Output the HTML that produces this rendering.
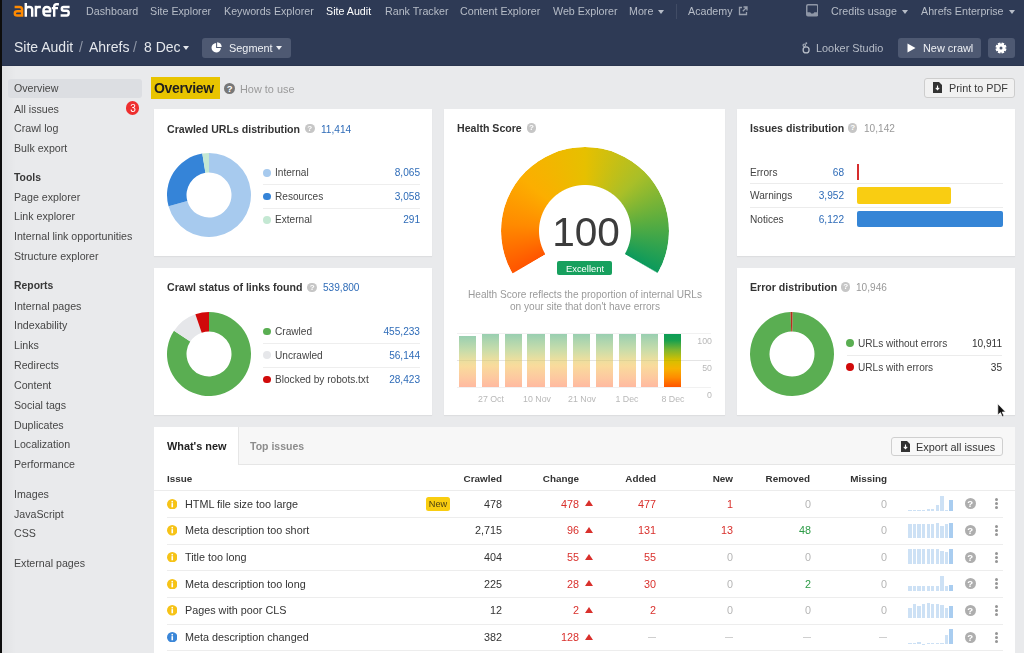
<!DOCTYPE html><html><head><meta charset="utf-8"><style>
html,body{margin:0;padding:0;}
body{width:1024px;height:653px;overflow:hidden;position:relative;background:#e9eaec;font-family:"Liberation Sans", sans-serif;}
.t{position:absolute;white-space:nowrap;line-height:1;will-change:transform;}
.r{position:absolute;}

</style></head><body>
<div class="r" style="left:0.00px;top:0.00px;width:1024.00px;height:66.00px;background:#2e3a55;"></div>
<div class="r" style="left:0.00px;top:65.00px;width:1024.00px;height:1.00px;background:#2a354f;"></div>
<div class="r" style="left:0.00px;top:0.00px;width:1.60px;height:653.00px;background:#0d0d0d;"></div>
<div class="r" style="left:1.60px;top:66.00px;width:14.40px;height:587.00px;background:linear-gradient(to right, rgba(0,0,0,0.035), rgba(0,0,0,0));"></div>
<svg class="r" style="left:0;top:0" width="80" height="22" viewBox="0 0 80 22"><g fill="none" stroke-width="2.45" stroke-linejoin="round"><path stroke="#ff8a00" d="M14.6 6.9 H19.4 Q22.1 6.9 22.1 9.6 V16.7 M22.1 11.3 H17.3 Q14.8 11.3 14.8 13.4 Q14.8 15.5 17.3 15.5 H22.1"/><path stroke="#fff" d="M25.8 3.1 V16.7 M25.8 9.6 Q25.8 6.9 28.5 6.9 H29.5 Q32.2 6.9 32.2 9.6 V16.7"/><path stroke="#fff" d="M35.9 5.7 V16.7 M35.9 9.6 Q35.9 6.9 38.6 6.9 H40.9"/><path stroke="#fff" d="M43.4 11.4 H50.2 V10.2 Q50.2 6.9 46.8 6.9 Q43.4 6.9 43.4 11.2 Q43.4 15.5 46.8 15.5 H50.8"/><path stroke="#fff" d="M54.2 16.7 V6.4 Q54.2 4.3 56.4 4.3 H58.9 M51.8 8.1 H58.0"/><path stroke="#fff" d="M69.6 6.9 H63.6 Q61.8 6.9 61.8 8.8 Q61.8 10.8 63.8 10.8 H66.8 Q68.7 10.8 68.7 13.1 Q68.7 15.5 66.8 15.5 H60.6"/></g></svg>
<div class="t" style="left:85.60px;top:5.80px;font-size:10.7px;color:#b6bcc7;font-weight:400;">Dashboard</div>
<div class="t" style="left:150.30px;top:5.80px;font-size:10.7px;color:#b6bcc7;font-weight:400;">Site Explorer</div>
<div class="t" style="left:223.50px;top:5.80px;font-size:10.7px;color:#b6bcc7;font-weight:400;">Keywords Explorer</div>
<div class="t" style="left:385.30px;top:5.80px;font-size:10.7px;color:#b6bcc7;font-weight:400;">Rank Tracker</div>
<div class="t" style="left:459.70px;top:5.80px;font-size:10.7px;color:#b6bcc7;font-weight:400;">Content Explorer</div>
<div class="t" style="left:552.90px;top:5.80px;font-size:10.7px;color:#b6bcc7;font-weight:400;">Web Explorer</div>
<div class="t" style="left:629.00px;top:5.80px;font-size:10.7px;color:#b6bcc7;font-weight:400;">More</div>
<div class="t" style="left:326.00px;top:5.80px;font-size:10.7px;color:#ffffff;font-weight:400;">Site Audit</div>
<div class="r" style="left:657.60px;top:9.80px;width:0;height:0;border-left:3.20px solid transparent;border-right:3.20px solid transparent;border-top:4.00px solid #b6bcc7;"></div>
<div class="r" style="left:676.20px;top:3.50px;width:1.00px;height:15.00px;background:#414c65;"></div>
<div class="t" style="left:688.40px;top:5.80px;font-size:10.7px;color:#b6bcc7;font-weight:400;">Academy</div>
<svg class="r" style="left:737.5px;top:5.5px" width="10" height="10" viewBox="0 0 10 10"><path d="M4 1.5H1.5V8.5H8.5V6" fill="none" stroke="#99a0ae" stroke-width="1.3"/><path d="M5.5 1H9V4.5M9 1L4.8 5.2" fill="none" stroke="#99a0ae" stroke-width="1.3"/></svg>
<svg class="r" style="left:805.8px;top:4.1px" width="12.5" height="12.5" viewBox="0 0 12.5 12.5"><rect x="0.75" y="0.75" width="11" height="11" rx="1.2" fill="none" stroke="#8e96a6" stroke-width="1.5"/><path d="M1 8.3H4.2L5.2 9.6H7.3L8.3 8.3H11.5V11.5H1Z" fill="#8e96a6"/></svg>
<div class="t" style="left:830.60px;top:5.80px;font-size:10.7px;color:#b6bcc7;font-weight:400;">Credits usage</div>
<div class="r" style="left:902.10px;top:9.80px;width:0;height:0;border-left:3.20px solid transparent;border-right:3.20px solid transparent;border-top:4.00px solid #b6bcc7;"></div>
<div class="t" style="left:921.30px;top:5.80px;font-size:10.7px;color:#b6bcc7;font-weight:400;">Ahrefs Enterprise</div>
<div class="r" style="left:1008.90px;top:9.80px;width:0;height:0;border-left:3.20px solid transparent;border-right:3.20px solid transparent;border-top:4.00px solid #b6bcc7;"></div>
<div class="t" style="left:13.80px;top:40.00px;font-size:14px;color:#e4e7ec;font-weight:400;">Site Audit</div>
<div class="t" style="left:78.50px;top:40.00px;font-size:14px;color:#8f97a7;font-weight:300;">/</div>
<div class="t" style="left:88.80px;top:40.00px;font-size:14px;color:#e4e7ec;font-weight:400;">Ahrefs</div>
<div class="t" style="left:133.20px;top:40.00px;font-size:14px;color:#8f97a7;font-weight:400;">/</div>
<div class="t" style="left:143.60px;top:40.00px;font-size:14px;color:#e4e7ec;font-weight:400;">8 Dec</div>
<div class="r" style="left:183.10px;top:46.30px;width:0;height:0;border-left:3.20px solid transparent;border-right:3.20px solid transparent;border-top:4.00px solid #e4e7ec;"></div>
<div class="r" style="left:201.60px;top:37.90px;width:89.00px;height:19.90px;background:#4e5972;border-radius:3px;"></div>
<svg class="r" style="left:210.6px;top:42px" width="11" height="11" viewBox="0 0 11 11"><path d="M6.1 0.3 A4.9 4.9 0 0 1 10.7 4.9 L6.1 4.9Z" fill="#fff"/><path d="M5.1 1.1 A4.7 4.7 0 1 0 9.9 5.9 L5.1 5.9Z" fill="#fff"/></svg>
<div class="t" style="left:228.50px;top:42.80px;font-size:10.9px;color:#eef0f4;font-weight:400;">Segment</div>
<div class="r" style="left:276.20px;top:46.20px;width:0;height:0;border-left:3.20px solid transparent;border-right:3.20px solid transparent;border-top:4.00px solid #eef0f4;"></div>
<svg class="r" style="left:800px;top:40px" width="12" height="16" viewBox="0 0 12 16"><circle cx="6.1" cy="9.9" r="3.0" fill="none" stroke="#b7bdc8" stroke-width="1.25"/><circle cx="4.3" cy="5.3" r="1.25" fill="none" stroke="#a4abb8" stroke-width="1.1"/><circle cx="6.3" cy="3.3" r="0.95" fill="#a4abb8"/></svg>
<div class="t" style="left:816.20px;top:43.00px;font-size:10.9px;color:#b6bcc7;font-weight:400;">Looker Studio</div>
<div class="r" style="left:897.90px;top:37.90px;width:83.40px;height:20.00px;background:#4e5972;border-radius:3px;"></div>
<svg class="r" style="left:907.3px;top:42.5px" width="9" height="10" viewBox="0 0 9 10"><path d="M0.5 0.5L8.5 5L0.5 9.5Z" fill="#fff"/></svg>
<div class="t" style="left:923.00px;top:43.00px;font-size:10.9px;color:#eef0f4;font-weight:400;">New crawl</div>
<div class="r" style="left:988.00px;top:37.90px;width:27.20px;height:20.00px;background:#4e5972;border-radius:3px;"></div>
<svg class="r" style="left:994.4px;top:40.8px" width="14" height="14" viewBox="-7 -7 14 14"><rect x="-1.45" y="-5.5" width="2.9" height="2.8" rx="0.3" transform="rotate(22.5)" fill="#fff"/><rect x="-1.45" y="-5.5" width="2.9" height="2.8" rx="0.3" transform="rotate(67.5)" fill="#fff"/><rect x="-1.45" y="-5.5" width="2.9" height="2.8" rx="0.3" transform="rotate(112.5)" fill="#fff"/><rect x="-1.45" y="-5.5" width="2.9" height="2.8" rx="0.3" transform="rotate(157.5)" fill="#fff"/><rect x="-1.45" y="-5.5" width="2.9" height="2.8" rx="0.3" transform="rotate(202.5)" fill="#fff"/><rect x="-1.45" y="-5.5" width="2.9" height="2.8" rx="0.3" transform="rotate(247.5)" fill="#fff"/><rect x="-1.45" y="-5.5" width="2.9" height="2.8" rx="0.3" transform="rotate(292.5)" fill="#fff"/><rect x="-1.45" y="-5.5" width="2.9" height="2.8" rx="0.3" transform="rotate(337.5)" fill="#fff"/><circle r="3.9" fill="#fff"/><circle r="1.5" fill="#4e5972"/></svg>
<div class="r" style="left:8.00px;top:78.80px;width:133.80px;height:19.00px;background:#dcdee2;border-radius:3px;"></div>
<div class="t" style="left:13.90px;top:83.30px;font-size:10.65px;color:#464646;font-weight:400;">Overview</div>
<div class="t" style="left:13.90px;top:103.50px;font-size:10.65px;color:#464646;font-weight:400;">All issues</div>
<div class="t" style="left:13.90px;top:123.30px;font-size:10.65px;color:#464646;font-weight:400;">Crawl log</div>
<div class="t" style="left:13.90px;top:143.00px;font-size:10.65px;color:#464646;font-weight:400;">Bulk export</div>
<div class="t" style="left:13.90px;top:191.70px;font-size:10.65px;color:#464646;font-weight:400;">Page explorer</div>
<div class="t" style="left:13.90px;top:211.40px;font-size:10.65px;color:#464646;font-weight:400;">Link explorer</div>
<div class="t" style="left:13.90px;top:231.40px;font-size:10.65px;color:#464646;font-weight:400;">Internal link opportunities</div>
<div class="t" style="left:13.90px;top:251.30px;font-size:10.65px;color:#464646;font-weight:400;">Structure explorer</div>
<div class="t" style="left:13.90px;top:300.80px;font-size:10.65px;color:#464646;font-weight:400;">Internal pages</div>
<div class="t" style="left:13.90px;top:320.20px;font-size:10.65px;color:#464646;font-weight:400;">Indexability</div>
<div class="t" style="left:13.90px;top:340.00px;font-size:10.65px;color:#464646;font-weight:400;">Links</div>
<div class="t" style="left:13.90px;top:360.00px;font-size:10.65px;color:#464646;font-weight:400;">Redirects</div>
<div class="t" style="left:13.90px;top:379.80px;font-size:10.65px;color:#464646;font-weight:400;">Content</div>
<div class="t" style="left:13.90px;top:399.60px;font-size:10.65px;color:#464646;font-weight:400;">Social tags</div>
<div class="t" style="left:13.90px;top:419.70px;font-size:10.65px;color:#464646;font-weight:400;">Duplicates</div>
<div class="t" style="left:13.90px;top:439.40px;font-size:10.65px;color:#464646;font-weight:400;">Localization</div>
<div class="t" style="left:13.90px;top:459.20px;font-size:10.65px;color:#464646;font-weight:400;">Performance</div>
<div class="t" style="left:13.90px;top:489.00px;font-size:10.65px;color:#464646;font-weight:400;">Images</div>
<div class="t" style="left:13.90px;top:508.70px;font-size:10.65px;color:#464646;font-weight:400;">JavaScript</div>
<div class="t" style="left:13.90px;top:528.30px;font-size:10.65px;color:#464646;font-weight:400;">CSS</div>
<div class="t" style="left:13.90px;top:557.70px;font-size:10.65px;color:#464646;font-weight:400;">External pages</div>
<div class="t" style="left:13.90px;top:172.80px;font-size:10.4px;color:#383838;font-weight:700;">Tools</div>
<div class="t" style="left:13.90px;top:281.20px;font-size:10.4px;color:#383838;font-weight:700;">Reports</div>
<div class="r" style="left:125.90px;top:101.30px;width:13.40px;height:13.60px;background:#ee2e2e;border-radius:50%;"></div>
<div class="t" style="left:-167.40px;width:600px;text-align:center;top:103.90px;font-size:10px;color:#fff;font-weight:400;">3</div>
<div class="r" style="left:150.80px;top:77.00px;width:69.20px;height:21.70px;background:#e8c400;"></div>
<div class="t" style="left:154.40px;top:81.00px;font-size:14px;color:#1f1f1f;font-weight:700;letter-spacing:-0.3px;">Overview</div>
<div class="r" style="left:224.10px;top:83.10px;width:11px;height:11px;border-radius:50%;background:#777;color:#fff;font-size:9.50px;line-height:11px;text-align:center;font-weight:700;">?</div>
<div class="t" style="left:239.60px;top:84.30px;font-size:10.9px;color:#9a9a9a;font-weight:400;">How to use</div>
<div class="r" style="left:923.60px;top:77.60px;width:91.40px;height:20.20px;background:#f1f1f1;border:1px solid #cdcdcd;border-radius:3px;box-sizing:border-box;"></div>
<svg class="r" style="left:932.7px;top:82px" width="9" height="11" viewBox="0 0 9 11"><path d="M0 0H6L9 3V11H0Z" fill="#333"/><path d="M4.5 3.5V7.5M2.8 5.9L4.5 7.7L6.2 5.9" stroke="#fff" stroke-width="1.1" fill="none"/></svg>
<div class="t" style="left:948.60px;top:83.00px;font-size:10.8px;color:#3a3a3a;font-weight:400;">Print to PDF</div>
<div class="r" style="left:154.00px;top:109.00px;width:278.30px;height:147.20px;background:#fff;box-shadow:0 1px 1px rgba(0,0,0,0.05);"></div>
<div class="r" style="left:154.00px;top:267.70px;width:278.30px;height:147.40px;background:#fff;box-shadow:0 1px 1px rgba(0,0,0,0.05);"></div>
<div class="r" style="left:444.10px;top:109.00px;width:280.90px;height:306.10px;background:#fff;box-shadow:0 1px 1px rgba(0,0,0,0.05);"></div>
<div class="r" style="left:737.20px;top:109.00px;width:278.00px;height:147.20px;background:#fff;box-shadow:0 1px 1px rgba(0,0,0,0.05);"></div>
<div class="r" style="left:737.20px;top:267.70px;width:278.00px;height:147.40px;background:#fff;box-shadow:0 1px 1px rgba(0,0,0,0.05);"></div>
<div class="t" style="left:167.00px;top:123.60px;font-size:10.6px;color:#333;font-weight:700;">Crawled URLs distribution</div>
<div class="r" style="left:305.05px;top:123.85px;width:9.5px;height:9.5px;border-radius:50%;background:#c6c6c6;color:#fff;font-size:8.07px;line-height:9.5px;text-align:center;font-weight:700;">?</div>
<div class="t" style="left:320.80px;top:124.60px;font-size:10.1px;color:#2f6cb8;font-weight:400;">11,414</div>
<svg class="r" style="left:164.60px;top:151.00px;" width="88" height="88"><path d="M44.000,2.000 A42,42 0 1 1 3.553,55.315 L22.332,50.061 A22.5,22.5 0 1 0 44.000,21.500 Z" fill="#a7caee"/><path d="M3.553,55.315 A42,42 0 0 1 37.301,2.538 L40.411,21.788 A22.5,22.5 0 0 0 22.332,50.061 Z" fill="#3584d8"/><path d="M37.301,2.538 A42,42 0 0 1 44.000,2.000 L44.000,21.500 A22.5,22.5 0 0 0 40.411,21.788 Z" fill="#c4e8d3"/></svg>
<div class="r" style="left:262.80px;top:168.90px;width:7.8px;height:7.8px;border-radius:50%;background:#a7caee"></div>
<div class="t" style="left:275.30px;top:168.20px;font-size:10.1px;color:#444;font-weight:400;">Internal</div>
<div class="t" style="left:-180.30px;width:600px;text-align:right;top:168.20px;font-size:10.1px;color:#2f6cb8;font-weight:400;">8,065</div>
<div class="r" style="left:262.80px;top:192.70px;width:7.8px;height:7.8px;border-radius:50%;background:#3584d8"></div>
<div class="t" style="left:275.30px;top:192.00px;font-size:10.1px;color:#444;font-weight:400;">Resources</div>
<div class="t" style="left:-180.30px;width:600px;text-align:right;top:192.00px;font-size:10.1px;color:#2f6cb8;font-weight:400;">3,058</div>
<div class="r" style="left:262.80px;top:215.90px;width:7.8px;height:7.8px;border-radius:50%;background:#c4e8d3"></div>
<div class="t" style="left:275.30px;top:215.20px;font-size:10.1px;color:#444;font-weight:400;">External</div>
<div class="t" style="left:-180.30px;width:600px;text-align:right;top:215.20px;font-size:10.1px;color:#2f6cb8;font-weight:400;">291</div>
<div class="r" style="left:262.70px;top:184.00px;width:157.00px;height:1.00px;background:#eeeeee;"></div>
<div class="r" style="left:262.70px;top:208.00px;width:157.00px;height:1.00px;background:#eeeeee;"></div>
<div class="t" style="left:166.50px;top:282.30px;font-size:10.6px;color:#333;font-weight:700;">Crawl status of links found</div>
<div class="r" style="left:307.45px;top:282.55px;width:9.5px;height:9.5px;border-radius:50%;background:#c6c6c6;color:#fff;font-size:8.07px;line-height:9.5px;text-align:center;font-weight:700;">?</div>
<div class="t" style="left:322.60px;top:283.30px;font-size:10.1px;color:#2f6cb8;font-weight:400;">539,800</div>
<svg class="r" style="left:164.60px;top:310.40px;" width="88" height="88"><path d="M44.000,2.000 A42,42 0 1 1 9.018,20.757 L25.260,31.548 A22.5,22.5 0 1 0 44.000,21.500 Z" fill="#5aae52"/><path d="M9.018,20.757 A42,42 0 0 1 30.357,4.278 L36.691,22.720 A22.5,22.5 0 0 0 25.260,31.548 Z" fill="#e6e7ea"/><path d="M30.357,4.278 A42,42 0 0 1 44.000,2.000 L44.000,21.500 A22.5,22.5 0 0 0 36.691,22.720 Z" fill="#d10a0a"/></svg>
<div class="r" style="left:262.80px;top:327.60px;width:7.8px;height:7.8px;border-radius:50%;background:#5aae52"></div>
<div class="t" style="left:275.30px;top:326.90px;font-size:10.1px;color:#444;font-weight:400;">Crawled</div>
<div class="t" style="left:-180.30px;width:600px;text-align:right;top:326.90px;font-size:10.1px;color:#2f6cb8;font-weight:400;">455,233</div>
<div class="r" style="left:262.80px;top:351.40px;width:7.8px;height:7.8px;border-radius:50%;background:#e6e7ea"></div>
<div class="t" style="left:275.30px;top:350.70px;font-size:10.1px;color:#444;font-weight:400;">Uncrawled</div>
<div class="t" style="left:-180.30px;width:600px;text-align:right;top:350.70px;font-size:10.1px;color:#2f6cb8;font-weight:400;">56,144</div>
<div class="r" style="left:262.80px;top:375.50px;width:7.8px;height:7.8px;border-radius:50%;background:#d10a0a"></div>
<div class="t" style="left:275.30px;top:374.80px;font-size:10.1px;color:#444;font-weight:400;">Blocked by robots.txt</div>
<div class="t" style="left:-180.30px;width:600px;text-align:right;top:374.80px;font-size:10.1px;color:#2f6cb8;font-weight:400;">28,423</div>
<div class="r" style="left:262.70px;top:343.00px;width:157.00px;height:1.00px;background:#eeeeee;"></div>
<div class="r" style="left:262.70px;top:367.00px;width:157.00px;height:1.00px;background:#eeeeee;"></div>
<div class="t" style="left:457.30px;top:122.90px;font-size:10.6px;color:#333;font-weight:700;">Health Score</div>
<div class="r" style="left:526.75px;top:123.15px;width:9.5px;height:9.5px;border-radius:50%;background:#c6c6c6;color:#fff;font-size:8.07px;line-height:9.5px;text-align:center;font-weight:700;">?</div>
<div class="r" style="left:500.90px;top:146.90px;width:168px;height:168px;border-radius:50%;background:conic-gradient(from -120deg, #ff5500 0deg, #ff8a00 35deg, #fcae00 70deg, #e6c000 120deg, #a9bf28 165deg, #5eae3e 200deg, #0c9a5c 239.5deg, rgba(12,154,92,0) 240.5deg, rgba(255,85,0,0) 359.3deg, #ff5500 360deg);-webkit-mask:radial-gradient(circle closest-side, transparent 45.5px, #000 46.5px);"></div>
<div class="t" style="left:285.50px;width:600px;text-align:center;top:212.00px;font-size:40.6px;color:#3c3c3c;font-weight:400;">100</div>
<div class="r" style="left:556.80px;top:261.20px;width:55.70px;height:13.60px;background:#17a05e;border-radius:2px;"></div>
<div class="t" style="left:284.70px;width:600px;text-align:center;top:264.30px;font-size:9.4px;color:#fff;font-weight:400;">Excellent</div>
<div class="t" style="left:284.70px;width:600px;text-align:center;top:289.90px;font-size:10.1px;color:#9a9a9a;font-weight:400;">Health Score reflects the proportion of internal URLs</div>
<div class="t" style="left:284.70px;width:600px;text-align:center;top:302.40px;font-size:10.1px;color:#9a9a9a;font-weight:400;">on your site that don't have errors</div>
<div class="r" style="left:456.60px;top:332.70px;width:254.40px;height:1.00px;background:#f1f1f1;"></div>
<div class="r" style="left:456.60px;top:359.80px;width:254.40px;height:1.00px;background:#f1f1f1;"></div>
<div class="r" style="left:456.60px;top:386.70px;width:254.40px;height:1.00px;background:#f1f1f1;"></div>
<div class="r" style="left:459.20px;top:336.30px;width:17.20px;height:50.90px;background:linear-gradient(to bottom, #99cfb1 0%, #c6dcab 28%, #ebdf9f 48%, #f9db9c 60%, #fdc9a0 82%, #ffb9a0 100%);"></div>
<div class="r" style="left:481.96px;top:333.70px;width:17.20px;height:53.50px;background:linear-gradient(to bottom, #99cfb1 0%, #c6dcab 28%, #ebdf9f 48%, #f9db9c 60%, #fdc9a0 82%, #ffb9a0 100%);"></div>
<div class="r" style="left:504.72px;top:333.70px;width:17.20px;height:53.50px;background:linear-gradient(to bottom, #99cfb1 0%, #c6dcab 28%, #ebdf9f 48%, #f9db9c 60%, #fdc9a0 82%, #ffb9a0 100%);"></div>
<div class="r" style="left:527.48px;top:333.70px;width:17.20px;height:53.50px;background:linear-gradient(to bottom, #99cfb1 0%, #c6dcab 28%, #ebdf9f 48%, #f9db9c 60%, #fdc9a0 82%, #ffb9a0 100%);"></div>
<div class="r" style="left:550.24px;top:333.70px;width:17.20px;height:53.50px;background:linear-gradient(to bottom, #99cfb1 0%, #c6dcab 28%, #ebdf9f 48%, #f9db9c 60%, #fdc9a0 82%, #ffb9a0 100%);"></div>
<div class="r" style="left:573.00px;top:333.70px;width:17.20px;height:53.50px;background:linear-gradient(to bottom, #99cfb1 0%, #c6dcab 28%, #ebdf9f 48%, #f9db9c 60%, #fdc9a0 82%, #ffb9a0 100%);"></div>
<div class="r" style="left:595.76px;top:333.70px;width:17.20px;height:53.50px;background:linear-gradient(to bottom, #99cfb1 0%, #c6dcab 28%, #ebdf9f 48%, #f9db9c 60%, #fdc9a0 82%, #ffb9a0 100%);"></div>
<div class="r" style="left:618.52px;top:333.70px;width:17.20px;height:53.50px;background:linear-gradient(to bottom, #99cfb1 0%, #c6dcab 28%, #ebdf9f 48%, #f9db9c 60%, #fdc9a0 82%, #ffb9a0 100%);"></div>
<div class="r" style="left:641.28px;top:333.70px;width:17.20px;height:53.50px;background:linear-gradient(to bottom, #99cfb1 0%, #c6dcab 28%, #ebdf9f 48%, #f9db9c 60%, #fdc9a0 82%, #ffb9a0 100%);"></div>
<div class="r" style="left:664.04px;top:333.70px;width:17.20px;height:53.50px;background:linear-gradient(to bottom, #0e9c57 0%, #18a04e 12%, #7db52f 30%, #d4c000 49%, #f6b300 65%, #ff8c00 82%, #ff5500 100%);"></div>
<div class="r" style="left:456.60px;top:359.80px;width:254.40px;height:1.00px;background:rgba(0,0,0,0.05);"></div>
<div class="t" style="left:112.30px;width:600px;text-align:right;top:337.10px;font-size:8.8px;color:#b8b8b8;font-weight:400;">100</div>
<div class="t" style="left:112.30px;width:600px;text-align:right;top:364.10px;font-size:8.8px;color:#b8b8b8;font-weight:400;">50</div>
<div class="t" style="left:112.30px;width:600px;text-align:right;top:390.70px;font-size:8.8px;color:#b8b8b8;font-weight:400;">0</div>
<div class="t" style="left:191.00px;width:600px;text-align:center;top:394.60px;font-size:8.8px;color:#b8b8b8;font-weight:400;">27 Oct</div>
<div class="t" style="left:236.50px;width:600px;text-align:center;top:394.60px;font-size:8.8px;color:#b8b8b8;font-weight:400;">10 Nov</div>
<div class="t" style="left:281.80px;width:600px;text-align:center;top:394.60px;font-size:8.8px;color:#b8b8b8;font-weight:400;">21 Nov</div>
<div class="t" style="left:327.30px;width:600px;text-align:center;top:394.60px;font-size:8.8px;color:#b8b8b8;font-weight:400;">1 Dec</div>
<div class="t" style="left:373.00px;width:600px;text-align:center;top:394.60px;font-size:8.8px;color:#b8b8b8;font-weight:400;">8 Dec</div>
<div class="t" style="left:749.70px;top:123.00px;font-size:10.6px;color:#333;font-weight:700;">Issues distribution</div>
<div class="r" style="left:847.95px;top:123.25px;width:9.5px;height:9.5px;border-radius:50%;background:#c6c6c6;color:#fff;font-size:8.07px;line-height:9.5px;text-align:center;font-weight:700;">?</div>
<div class="t" style="left:863.50px;top:124.00px;font-size:10.1px;color:#999;font-weight:400;">10,142</div>
<div class="t" style="left:749.70px;top:168.00px;font-size:10.1px;color:#444;font-weight:400;">Errors</div>
<div class="t" style="left:244.20px;width:600px;text-align:right;top:168.00px;font-size:10.1px;color:#2f6cb8;font-weight:400;">68</div>
<div class="t" style="left:749.70px;top:191.30px;font-size:10.1px;color:#444;font-weight:400;">Warnings</div>
<div class="t" style="left:244.20px;width:600px;text-align:right;top:191.30px;font-size:10.1px;color:#2f6cb8;font-weight:400;">3,952</div>
<div class="t" style="left:749.70px;top:215.00px;font-size:10.1px;color:#444;font-weight:400;">Notices</div>
<div class="t" style="left:244.20px;width:600px;text-align:right;top:215.00px;font-size:10.1px;color:#2f6cb8;font-weight:400;">6,122</div>
<div class="r" style="left:856.80px;top:163.70px;width:1.90px;height:16.10px;background:#d62d2d;"></div>
<div class="r" style="left:856.80px;top:187.00px;width:94.50px;height:17.00px;background:#f9cd12;border-radius:2px;"></div>
<div class="r" style="left:856.80px;top:210.70px;width:145.80px;height:16.60px;background:#3585d6;border-radius:2px;"></div>
<div class="r" style="left:749.70px;top:182.60px;width:252.90px;height:1.00px;background:#ececec;"></div>
<div class="r" style="left:749.70px;top:206.70px;width:252.90px;height:1.00px;background:#ececec;"></div>
<div class="t" style="left:749.70px;top:282.00px;font-size:10.6px;color:#333;font-weight:700;">Error distribution</div>
<div class="r" style="left:840.85px;top:282.25px;width:9.5px;height:9.5px;border-radius:50%;background:#c6c6c6;color:#fff;font-size:8.07px;line-height:9.5px;text-align:center;font-weight:700;">?</div>
<div class="t" style="left:856.00px;top:283.00px;font-size:10.1px;color:#999;font-weight:400;">10,946</div>
<svg class="r" style="left:747.70px;top:310.30px;" width="88" height="88"><path d="M44.513,2.003 A42,42 0 1 1 42.534,2.026 L43.215,21.514 A22.5,22.5 0 1 0 44.275,21.502 Z" fill="#5aae52"/><path d="M42.534,2.026 A42,42 0 0 1 44.513,2.003 L44.275,21.502 A22.5,22.5 0 0 0 43.215,21.514 Z" fill="#b92b1c"/></svg>
<div class="r" style="left:846.20px;top:339.40px;width:7.8px;height:7.8px;border-radius:50%;background:#5aae52"></div>
<div class="t" style="left:858.00px;top:339.10px;font-size:10.1px;color:#444;font-weight:400;">URLs without errors</div>
<div class="t" style="left:402.40px;width:600px;text-align:right;top:339.10px;font-size:10.1px;color:#333;font-weight:400;">10,911</div>
<div class="r" style="left:846.20px;top:362.80px;width:7.8px;height:7.8px;border-radius:50%;background:#d10a0a"></div>
<div class="t" style="left:858.00px;top:362.50px;font-size:10.1px;color:#444;font-weight:400;">URLs with errors</div>
<div class="t" style="left:402.40px;width:600px;text-align:right;top:362.50px;font-size:10.1px;color:#333;font-weight:400;">35</div>
<div class="r" style="left:846.50px;top:355.00px;width:155.90px;height:1.00px;background:#ececec;"></div>
<svg class="r" style="left:996.5px;top:402.5px" width="10" height="15" viewBox="0 0 10 15"><path d="M0.8 0.8 L0.8 12 L3.4 9.6 L5.3 13.8 L7 13 L5.2 9 L8.6 9 Z" fill="#111" stroke="#fff" stroke-width="0.7"/></svg>
<div class="r" style="left:153.90px;top:427.00px;width:861.30px;height:226.00px;background:#fff;"></div>
<div class="r" style="left:238.20px;top:427.00px;width:777.00px;height:37.80px;background:#f7f7f7;"></div>
<div class="r" style="left:238.20px;top:464.00px;width:777.00px;height:1.00px;background:#e6e6e6;"></div>
<div class="r" style="left:238.00px;top:427.00px;width:1.00px;height:38.00px;background:#e6e6e6;"></div>
<div class="t" style="left:166.70px;top:441.20px;font-size:10.9px;color:#222;font-weight:700;">What's new</div>
<div class="t" style="left:250.30px;top:441.20px;font-size:10.5px;color:#8c8c8c;font-weight:700;">Top issues</div>
<div class="r" style="left:891.40px;top:436.50px;width:111.40px;height:19.10px;background:#f8f8f8;border:1px solid #cfcfcf;border-radius:3px;box-sizing:border-box;"></div>
<svg class="r" style="left:900.5px;top:441px" width="9" height="11" viewBox="0 0 9 11"><path d="M0 0H6L9 3V11H0Z" fill="#333"/><path d="M4.5 3.5V7.5M2.8 5.9L4.5 7.7L6.2 5.9" stroke="#fff" stroke-width="1.1" fill="none"/></svg>
<div class="t" style="left:916.00px;top:441.60px;font-size:10.9px;color:#333;font-weight:400;">Export all issues</div>
<div class="t" style="left:166.90px;top:473.80px;font-size:9.9px;color:#333;font-weight:700;">Issue</div>
<div class="t" style="left:-98.40px;width:600px;text-align:right;top:473.80px;font-size:9.9px;color:#333;font-weight:700;">Crawled</div>
<div class="t" style="left:-21.00px;width:600px;text-align:right;top:473.80px;font-size:9.9px;color:#333;font-weight:700;">Change</div>
<div class="t" style="left:56.00px;width:600px;text-align:right;top:473.80px;font-size:9.9px;color:#333;font-weight:700;">Added</div>
<div class="t" style="left:132.80px;width:600px;text-align:right;top:473.80px;font-size:9.9px;color:#333;font-weight:700;">New</div>
<div class="t" style="left:210.00px;width:600px;text-align:right;top:473.80px;font-size:9.9px;color:#333;font-weight:700;">Removed</div>
<div class="t" style="left:286.80px;width:600px;text-align:right;top:473.80px;font-size:9.9px;color:#333;font-weight:700;">Missing</div>
<div class="r" style="left:153.90px;top:490.00px;width:861.30px;height:1.00px;background:#ececec;"></div>
<svg class="r" style="left:166.75px;top:498.65px" width="10.5" height="10.5" viewBox="-5.25 -5.25 10.5 10.5"><circle r="5.25" fill="#f6c317"/><rect x="-0.8" y="-1.1" width="1.6" height="4.1" fill="#fff"/><circle cy="-2.6" r="0.85" fill="#fff"/></svg>
<div class="t" style="left:185.20px;top:498.70px;font-size:10.8px;color:#333;font-weight:400;">HTML file size too large</div>
<div class="r" style="left:425.80px;top:496.60px;width:24.40px;height:14.10px;background:#f9cd10;border-radius:2.5px;"></div>
<div class="t" style="left:138.00px;width:600px;text-align:center;top:500.20px;font-size:9.2px;color:#4a3f10;font-weight:400;">New</div>
<div class="t" style="left:-98.40px;width:600px;text-align:right;top:498.70px;font-size:10.8px;color:#333;font-weight:400;">478</div>
<div class="t" style="left:-21.00px;width:600px;text-align:right;top:498.70px;font-size:10.8px;color:#d9302c;font-weight:400;">478</div>
<div class="r" style="left:584.6px;top:500.30px;width:0;height:0;border-left:4.2px solid transparent;border-right:4.2px solid transparent;border-bottom:6px solid #d9302c;"></div>
<div class="t" style="left:56.00px;width:600px;text-align:right;top:498.70px;font-size:10.8px;color:#d9302c;font-weight:400;">477</div>
<div class="t" style="left:132.80px;width:600px;text-align:right;top:498.70px;font-size:10.8px;color:#d9302c;font-weight:400;">1</div>
<div class="t" style="left:210.80px;width:600px;text-align:right;top:498.70px;font-size:10.8px;color:#b5b5b5;font-weight:400;">0</div>
<div class="t" style="left:287.40px;width:600px;text-align:right;top:498.70px;font-size:10.8px;color:#b5b5b5;font-weight:400;">0</div>
<div class="r" style="left:908.30px;top:510.10px;width:3.40px;height:1.00px;background:#cde1f5;"></div>
<div class="r" style="left:912.86px;top:510.10px;width:3.40px;height:1.00px;background:#cde1f5;"></div>
<div class="r" style="left:917.42px;top:510.10px;width:3.40px;height:1.00px;background:#cde1f5;"></div>
<div class="r" style="left:921.98px;top:510.10px;width:3.40px;height:1.00px;background:#cde1f5;"></div>
<div class="r" style="left:926.54px;top:509.10px;width:3.40px;height:2.00px;background:#cde1f5;"></div>
<div class="r" style="left:931.10px;top:508.60px;width:3.40px;height:2.50px;background:#cde1f5;"></div>
<div class="r" style="left:935.66px;top:505.20px;width:3.40px;height:5.90px;background:#cde1f5;"></div>
<div class="r" style="left:940.22px;top:496.10px;width:3.40px;height:15.00px;background:#cde1f5;"></div>
<div class="r" style="left:944.78px;top:510.10px;width:3.40px;height:1.00px;background:#cde1f5;"></div>
<div class="r" style="left:949.34px;top:500.30px;width:3.40px;height:10.80px;background:#a9cdf0;"></div>
<div class="r" style="left:964.60px;top:498.30px;width:11.2px;height:11.2px;border-radius:50%;background:#aeaeae;color:#fff;font-size:9.60px;line-height:11.2px;text-align:center;font-weight:700;">?</div>
<div class="r" style="left:994.70px;top:498.40px;width:3px;height:3px;border-radius:50%;background:#959595"></div>
<div class="r" style="left:994.70px;top:502.40px;width:3px;height:3px;border-radius:50%;background:#959595"></div>
<div class="r" style="left:994.70px;top:506.40px;width:3px;height:3px;border-radius:50%;background:#959595"></div>
<div class="r" style="left:166.70px;top:516.80px;width:836.20px;height:1.00px;background:#ededed;"></div>
<svg class="r" style="left:166.75px;top:525.31px" width="10.5" height="10.5" viewBox="-5.25 -5.25 10.5 10.5"><circle r="5.25" fill="#f6c317"/><rect x="-0.8" y="-1.1" width="1.6" height="4.1" fill="#fff"/><circle cy="-2.6" r="0.85" fill="#fff"/></svg>
<div class="t" style="left:185.20px;top:525.36px;font-size:10.8px;color:#333;font-weight:400;">Meta description too short</div>
<div class="t" style="left:-98.40px;width:600px;text-align:right;top:525.36px;font-size:10.8px;color:#333;font-weight:400;">2,715</div>
<div class="t" style="left:-21.00px;width:600px;text-align:right;top:525.36px;font-size:10.8px;color:#d9302c;font-weight:400;">96</div>
<div class="r" style="left:584.6px;top:526.96px;width:0;height:0;border-left:4.2px solid transparent;border-right:4.2px solid transparent;border-bottom:6px solid #d9302c;"></div>
<div class="t" style="left:56.00px;width:600px;text-align:right;top:525.36px;font-size:10.8px;color:#d9302c;font-weight:400;">131</div>
<div class="t" style="left:132.80px;width:600px;text-align:right;top:525.36px;font-size:10.8px;color:#d9302c;font-weight:400;">13</div>
<div class="t" style="left:210.80px;width:600px;text-align:right;top:525.36px;font-size:10.8px;color:#2c9b46;font-weight:400;">48</div>
<div class="t" style="left:287.40px;width:600px;text-align:right;top:525.36px;font-size:10.8px;color:#b5b5b5;font-weight:400;">0</div>
<div class="r" style="left:908.30px;top:524.06px;width:3.40px;height:13.70px;background:#cde1f5;"></div>
<div class="r" style="left:912.86px;top:524.06px;width:3.40px;height:13.70px;background:#cde1f5;"></div>
<div class="r" style="left:917.42px;top:523.56px;width:3.40px;height:14.20px;background:#cde1f5;"></div>
<div class="r" style="left:921.98px;top:523.56px;width:3.40px;height:14.20px;background:#cde1f5;"></div>
<div class="r" style="left:926.54px;top:523.56px;width:3.40px;height:14.20px;background:#cde1f5;"></div>
<div class="r" style="left:931.10px;top:523.56px;width:3.40px;height:14.20px;background:#cde1f5;"></div>
<div class="r" style="left:935.66px;top:522.96px;width:3.40px;height:14.80px;background:#cde1f5;"></div>
<div class="r" style="left:940.22px;top:526.16px;width:3.40px;height:11.60px;background:#cde1f5;"></div>
<div class="r" style="left:944.78px;top:523.56px;width:3.40px;height:14.20px;background:#cde1f5;"></div>
<div class="r" style="left:949.34px;top:522.76px;width:3.40px;height:15.00px;background:#a9cdf0;"></div>
<div class="r" style="left:964.60px;top:524.96px;width:11.2px;height:11.2px;border-radius:50%;background:#aeaeae;color:#fff;font-size:9.60px;line-height:11.2px;text-align:center;font-weight:700;">?</div>
<div class="r" style="left:994.70px;top:525.06px;width:3px;height:3px;border-radius:50%;background:#959595"></div>
<div class="r" style="left:994.70px;top:529.06px;width:3px;height:3px;border-radius:50%;background:#959595"></div>
<div class="r" style="left:994.70px;top:533.06px;width:3px;height:3px;border-radius:50%;background:#959595"></div>
<div class="r" style="left:166.70px;top:543.50px;width:836.20px;height:1.00px;background:#ededed;"></div>
<svg class="r" style="left:166.75px;top:551.97px" width="10.5" height="10.5" viewBox="-5.25 -5.25 10.5 10.5"><circle r="5.25" fill="#f6c317"/><rect x="-0.8" y="-1.1" width="1.6" height="4.1" fill="#fff"/><circle cy="-2.6" r="0.85" fill="#fff"/></svg>
<div class="t" style="left:185.20px;top:552.02px;font-size:10.8px;color:#333;font-weight:400;">Title too long</div>
<div class="t" style="left:-98.40px;width:600px;text-align:right;top:552.02px;font-size:10.8px;color:#333;font-weight:400;">404</div>
<div class="t" style="left:-21.00px;width:600px;text-align:right;top:552.02px;font-size:10.8px;color:#d9302c;font-weight:400;">55</div>
<div class="r" style="left:584.6px;top:553.62px;width:0;height:0;border-left:4.2px solid transparent;border-right:4.2px solid transparent;border-bottom:6px solid #d9302c;"></div>
<div class="t" style="left:56.00px;width:600px;text-align:right;top:552.02px;font-size:10.8px;color:#d9302c;font-weight:400;">55</div>
<div class="t" style="left:132.80px;width:600px;text-align:right;top:552.02px;font-size:10.8px;color:#b5b5b5;font-weight:400;">0</div>
<div class="t" style="left:210.80px;width:600px;text-align:right;top:552.02px;font-size:10.8px;color:#b5b5b5;font-weight:400;">0</div>
<div class="t" style="left:287.40px;width:600px;text-align:right;top:552.02px;font-size:10.8px;color:#b5b5b5;font-weight:400;">0</div>
<div class="r" style="left:908.30px;top:549.42px;width:3.40px;height:15.00px;background:#cde1f5;"></div>
<div class="r" style="left:912.86px;top:549.42px;width:3.40px;height:15.00px;background:#cde1f5;"></div>
<div class="r" style="left:917.42px;top:549.42px;width:3.40px;height:15.00px;background:#cde1f5;"></div>
<div class="r" style="left:921.98px;top:549.42px;width:3.40px;height:15.00px;background:#cde1f5;"></div>
<div class="r" style="left:926.54px;top:549.42px;width:3.40px;height:15.00px;background:#cde1f5;"></div>
<div class="r" style="left:931.10px;top:549.42px;width:3.40px;height:15.00px;background:#cde1f5;"></div>
<div class="r" style="left:935.66px;top:549.42px;width:3.40px;height:15.00px;background:#cde1f5;"></div>
<div class="r" style="left:940.22px;top:550.72px;width:3.40px;height:13.70px;background:#cde1f5;"></div>
<div class="r" style="left:944.78px;top:551.52px;width:3.40px;height:12.90px;background:#cde1f5;"></div>
<div class="r" style="left:949.34px;top:549.42px;width:3.40px;height:15.00px;background:#a9cdf0;"></div>
<div class="r" style="left:964.60px;top:551.62px;width:11.2px;height:11.2px;border-radius:50%;background:#aeaeae;color:#fff;font-size:9.60px;line-height:11.2px;text-align:center;font-weight:700;">?</div>
<div class="r" style="left:994.70px;top:551.72px;width:3px;height:3px;border-radius:50%;background:#959595"></div>
<div class="r" style="left:994.70px;top:555.72px;width:3px;height:3px;border-radius:50%;background:#959595"></div>
<div class="r" style="left:994.70px;top:559.72px;width:3px;height:3px;border-radius:50%;background:#959595"></div>
<div class="r" style="left:166.70px;top:570.20px;width:836.20px;height:1.00px;background:#ededed;"></div>
<svg class="r" style="left:166.75px;top:578.63px" width="10.5" height="10.5" viewBox="-5.25 -5.25 10.5 10.5"><circle r="5.25" fill="#f6c317"/><rect x="-0.8" y="-1.1" width="1.6" height="4.1" fill="#fff"/><circle cy="-2.6" r="0.85" fill="#fff"/></svg>
<div class="t" style="left:185.20px;top:578.68px;font-size:10.8px;color:#333;font-weight:400;">Meta description too long</div>
<div class="t" style="left:-98.40px;width:600px;text-align:right;top:578.68px;font-size:10.8px;color:#333;font-weight:400;">225</div>
<div class="t" style="left:-21.00px;width:600px;text-align:right;top:578.68px;font-size:10.8px;color:#d9302c;font-weight:400;">28</div>
<div class="r" style="left:584.6px;top:580.28px;width:0;height:0;border-left:4.2px solid transparent;border-right:4.2px solid transparent;border-bottom:6px solid #d9302c;"></div>
<div class="t" style="left:56.00px;width:600px;text-align:right;top:578.68px;font-size:10.8px;color:#d9302c;font-weight:400;">30</div>
<div class="t" style="left:132.80px;width:600px;text-align:right;top:578.68px;font-size:10.8px;color:#b5b5b5;font-weight:400;">0</div>
<div class="t" style="left:210.80px;width:600px;text-align:right;top:578.68px;font-size:10.8px;color:#2c9b46;font-weight:400;">2</div>
<div class="t" style="left:287.40px;width:600px;text-align:right;top:578.68px;font-size:10.8px;color:#b5b5b5;font-weight:400;">0</div>
<div class="r" style="left:908.30px;top:585.68px;width:3.40px;height:5.40px;background:#cde1f5;"></div>
<div class="r" style="left:912.86px;top:585.68px;width:3.40px;height:5.40px;background:#cde1f5;"></div>
<div class="r" style="left:917.42px;top:585.68px;width:3.40px;height:5.40px;background:#cde1f5;"></div>
<div class="r" style="left:921.98px;top:585.68px;width:3.40px;height:5.40px;background:#cde1f5;"></div>
<div class="r" style="left:926.54px;top:585.68px;width:3.40px;height:5.40px;background:#cde1f5;"></div>
<div class="r" style="left:931.10px;top:585.68px;width:3.40px;height:5.40px;background:#cde1f5;"></div>
<div class="r" style="left:935.66px;top:585.68px;width:3.40px;height:5.40px;background:#cde1f5;"></div>
<div class="r" style="left:940.22px;top:576.08px;width:3.40px;height:15.00px;background:#cde1f5;"></div>
<div class="r" style="left:944.78px;top:586.38px;width:3.40px;height:4.70px;background:#cde1f5;"></div>
<div class="r" style="left:949.34px;top:585.38px;width:3.40px;height:5.70px;background:#a9cdf0;"></div>
<div class="r" style="left:964.60px;top:578.28px;width:11.2px;height:11.2px;border-radius:50%;background:#aeaeae;color:#fff;font-size:9.60px;line-height:11.2px;text-align:center;font-weight:700;">?</div>
<div class="r" style="left:994.70px;top:578.38px;width:3px;height:3px;border-radius:50%;background:#959595"></div>
<div class="r" style="left:994.70px;top:582.38px;width:3px;height:3px;border-radius:50%;background:#959595"></div>
<div class="r" style="left:994.70px;top:586.38px;width:3px;height:3px;border-radius:50%;background:#959595"></div>
<div class="r" style="left:166.70px;top:596.90px;width:836.20px;height:1.00px;background:#ededed;"></div>
<svg class="r" style="left:166.75px;top:605.29px" width="10.5" height="10.5" viewBox="-5.25 -5.25 10.5 10.5"><circle r="5.25" fill="#f6c317"/><rect x="-0.8" y="-1.1" width="1.6" height="4.1" fill="#fff"/><circle cy="-2.6" r="0.85" fill="#fff"/></svg>
<div class="t" style="left:185.20px;top:605.34px;font-size:10.8px;color:#333;font-weight:400;">Pages with poor CLS</div>
<div class="t" style="left:-98.40px;width:600px;text-align:right;top:605.34px;font-size:10.8px;color:#333;font-weight:400;">12</div>
<div class="t" style="left:-21.00px;width:600px;text-align:right;top:605.34px;font-size:10.8px;color:#d9302c;font-weight:400;">2</div>
<div class="r" style="left:584.6px;top:606.94px;width:0;height:0;border-left:4.2px solid transparent;border-right:4.2px solid transparent;border-bottom:6px solid #d9302c;"></div>
<div class="t" style="left:56.00px;width:600px;text-align:right;top:605.34px;font-size:10.8px;color:#d9302c;font-weight:400;">2</div>
<div class="t" style="left:132.80px;width:600px;text-align:right;top:605.34px;font-size:10.8px;color:#b5b5b5;font-weight:400;">0</div>
<div class="t" style="left:210.80px;width:600px;text-align:right;top:605.34px;font-size:10.8px;color:#b5b5b5;font-weight:400;">0</div>
<div class="t" style="left:287.40px;width:600px;text-align:right;top:605.34px;font-size:10.8px;color:#b5b5b5;font-weight:400;">0</div>
<div class="r" style="left:908.30px;top:608.04px;width:3.40px;height:9.70px;background:#cde1f5;"></div>
<div class="r" style="left:912.86px;top:603.54px;width:3.40px;height:14.20px;background:#cde1f5;"></div>
<div class="r" style="left:917.42px;top:605.64px;width:3.40px;height:12.10px;background:#cde1f5;"></div>
<div class="r" style="left:921.98px;top:603.54px;width:3.40px;height:14.20px;background:#cde1f5;"></div>
<div class="r" style="left:926.54px;top:602.74px;width:3.40px;height:15.00px;background:#cde1f5;"></div>
<div class="r" style="left:931.10px;top:603.54px;width:3.40px;height:14.20px;background:#cde1f5;"></div>
<div class="r" style="left:935.66px;top:603.54px;width:3.40px;height:14.20px;background:#cde1f5;"></div>
<div class="r" style="left:940.22px;top:604.94px;width:3.40px;height:12.80px;background:#cde1f5;"></div>
<div class="r" style="left:944.78px;top:608.04px;width:3.40px;height:9.70px;background:#cde1f5;"></div>
<div class="r" style="left:949.34px;top:605.64px;width:3.40px;height:12.10px;background:#a9cdf0;"></div>
<div class="r" style="left:964.60px;top:604.94px;width:11.2px;height:11.2px;border-radius:50%;background:#aeaeae;color:#fff;font-size:9.60px;line-height:11.2px;text-align:center;font-weight:700;">?</div>
<div class="r" style="left:994.70px;top:605.04px;width:3px;height:3px;border-radius:50%;background:#959595"></div>
<div class="r" style="left:994.70px;top:609.04px;width:3px;height:3px;border-radius:50%;background:#959595"></div>
<div class="r" style="left:994.70px;top:613.04px;width:3px;height:3px;border-radius:50%;background:#959595"></div>
<div class="r" style="left:166.70px;top:623.60px;width:836.20px;height:1.00px;background:#ededed;"></div>
<svg class="r" style="left:166.75px;top:631.95px" width="10.5" height="10.5" viewBox="-5.25 -5.25 10.5 10.5"><circle r="5.25" fill="#3a86d8"/><rect x="-0.8" y="-1.1" width="1.6" height="4.1" fill="#fff"/><circle cy="-2.6" r="0.85" fill="#fff"/></svg>
<div class="t" style="left:185.20px;top:632.00px;font-size:10.8px;color:#333;font-weight:400;">Meta description changed</div>
<div class="t" style="left:-98.40px;width:600px;text-align:right;top:632.00px;font-size:10.8px;color:#333;font-weight:400;">382</div>
<div class="t" style="left:-21.00px;width:600px;text-align:right;top:632.00px;font-size:10.8px;color:#d9302c;font-weight:400;">128</div>
<div class="r" style="left:584.6px;top:633.60px;width:0;height:0;border-left:4.2px solid transparent;border-right:4.2px solid transparent;border-bottom:6px solid #d9302c;"></div>
<div class="r" style="left:647.50px;top:637.40px;width:8.30px;height:1.00px;background:#cfcfcf;"></div>
<div class="r" style="left:724.50px;top:637.40px;width:8.30px;height:1.00px;background:#cfcfcf;"></div>
<div class="r" style="left:802.50px;top:637.40px;width:8.30px;height:1.00px;background:#cfcfcf;"></div>
<div class="r" style="left:879.10px;top:637.40px;width:8.30px;height:1.00px;background:#cfcfcf;"></div>
<div class="r" style="left:908.30px;top:643.40px;width:3.40px;height:1.00px;background:#cde1f5;"></div>
<div class="r" style="left:912.86px;top:643.40px;width:3.40px;height:1.00px;background:#cde1f5;"></div>
<div class="r" style="left:917.42px;top:641.70px;width:3.40px;height:2.70px;background:#cde1f5;"></div>
<div class="r" style="left:921.98px;top:643.70px;width:3.40px;height:0.70px;background:#cde1f5;"></div>
<div class="r" style="left:926.54px;top:643.40px;width:3.40px;height:1.00px;background:#cde1f5;"></div>
<div class="r" style="left:931.10px;top:643.40px;width:3.40px;height:1.00px;background:#cde1f5;"></div>
<div class="r" style="left:935.66px;top:643.40px;width:3.40px;height:1.00px;background:#cde1f5;"></div>
<div class="r" style="left:940.22px;top:643.40px;width:3.40px;height:1.00px;background:#cde1f5;"></div>
<div class="r" style="left:944.78px;top:634.70px;width:3.40px;height:9.70px;background:#cde1f5;"></div>
<div class="r" style="left:949.34px;top:629.40px;width:3.40px;height:15.00px;background:#a9cdf0;"></div>
<div class="r" style="left:964.60px;top:631.60px;width:11.2px;height:11.2px;border-radius:50%;background:#aeaeae;color:#fff;font-size:9.60px;line-height:11.2px;text-align:center;font-weight:700;">?</div>
<div class="r" style="left:994.70px;top:631.70px;width:3px;height:3px;border-radius:50%;background:#959595"></div>
<div class="r" style="left:994.70px;top:635.70px;width:3px;height:3px;border-radius:50%;background:#959595"></div>
<div class="r" style="left:994.70px;top:639.70px;width:3px;height:3px;border-radius:50%;background:#959595"></div>
<div class="r" style="left:166.70px;top:650.30px;width:836.20px;height:1.00px;background:#ededed;"></div>
</body></html>
